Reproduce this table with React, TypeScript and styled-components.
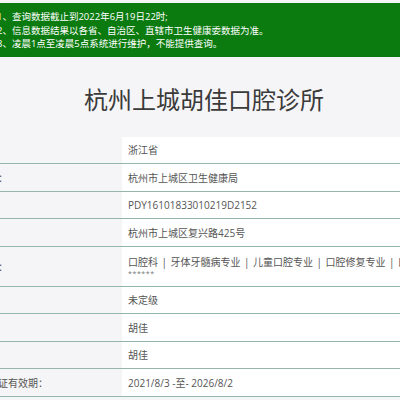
import React from "react";
import styled, { createGlobalStyle } from "styled-components";

const Global = createGlobalStyle`
  html, body {
    margin: 0;
    padding: 0;
    overflow: hidden;
    background: #f5f5f7;
    font-family: "Open Sans", "Noto Sans CJK SC", sans-serif;
  }
`;

const Page = styled.div`
  width: 532px;
  margin-left: -62px;
  padding-top: 3px;
`;

const Notice = styled.div`
  background: #0b7b0f;
  color: #ffffff;
  font-size: 9.5px;
  line-height: 13.5px;
  padding: 7px 0 0 59px;
  height: 54px;
  box-sizing: border-box;
`;

const Title = styled.h1`
  margin: 0;
  height: 80px;
  display: flex;
  align-items: center;
  justify-content: center;
  font-size: 24px;
  font-weight: 400;
  color: #3a3a3a;
  font-family: "Noto Sans CJK SC", sans-serif;
  padding-top: 2px;
  box-sizing: border-box;
`;

const Table = styled.div`
  display: grid;
  grid-template-columns: 184px 1fr;
`;

const Label = styled.div<{ $h: number }>`
  height: ${(p) => p.$h}px;
  box-sizing: border-box;
  border-bottom: 1px solid #95b6ab;
  background: #f5f5f7;
  font-size: 10px;
  color: #555;
  display: flex;
  align-items: center;
  padding-left: 20px;
  white-space: nowrap;
`;

const Value = styled.div<{ $h: number }>`
  height: ${(p) => p.$h}px;
  box-sizing: border-box;
  border-bottom: 1px solid #95b6ab;
  background: #ffffff;
  font-size: 10px;
  color: #555;
  display: flex;
  flex-direction: column;
  justify-content: center;
  padding-left: 6px;
  white-space: nowrap;
  line-height: 14px;
`;

const Sep = styled.span`
  margin: 0 3.5px;
`;

const Stars = styled.span`
  font-size: 7px;
  line-height: 10px;
  letter-spacing: 0.6px;
  color: #777;
`;

const subjects = ["口腔科", "牙体牙髓病专业", "儿童口腔专业", "口腔修复专业", "口腔颌面外科专业"];

const rows: { label: string; value: React.ReactNode; h: number }[] = [
  { label: "省份：", value: "浙江省", h: 27 },
  { label: "登记机关：", value: "杭州市上城区卫生健康局", h: 28 },
  { label: "登记号：", value: "PDY16101833010219D2152", h: 27 },
  { label: "地址：", value: "杭州市上城区复兴路425号", h: 28 },
  {
    label: "诊疗科目：",
    value: (
      <>
        <span>
          {subjects.map((s, i) => (
            <React.Fragment key={s}>
              {i > 0 && <Sep>|</Sep>}
              {s}
            </React.Fragment>
          ))}
        </span>
        <Stars>******</Stars>
      </>
    ),
    h: 40,
  },
  { label: "级别：", value: "未定级", h: 27 },
  { label: "法人：", value: "胡佳", h: 28 },
  { label: "负责：", value: "胡佳", h: 27 },
  { label: "执业许可证有效期：", value: "2021/8/3 -至- 2026/8/2", h: 28 },
];

export default function App() {
  return (
    <>
      <Global />
      <Page>
        <Notice>
          <div>1、查询数据截止到2022年6月19日22时;</div>
          <div>2、信息数据结果以各省、自治区、直辖市卫生健康委数据为准。</div>
          <div>3、凌晨1点至凌晨5点系统进行维护，不能提供查询。</div>
        </Notice>
        <Title>杭州上城胡佳口腔诊所</Title>
        <Table>
          {rows.map((r) => (
            <React.Fragment key={r.label}>
              <Label $h={r.h}>{r.label}</Label>
              <Value $h={r.h}>{r.value}</Value>
            </React.Fragment>
          ))}
        </Table>
      </Page>
    </>
  );
}
